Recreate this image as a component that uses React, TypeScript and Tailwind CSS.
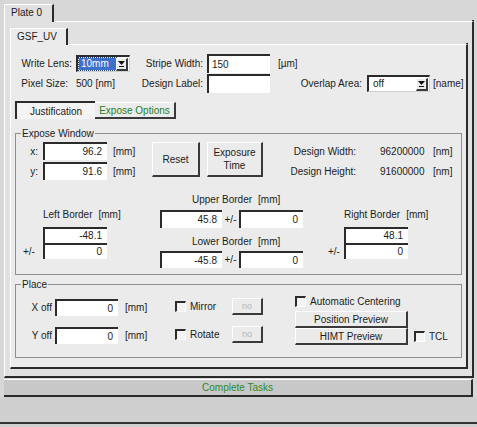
import type { ReactNode } from 'react';

function Field({ value = '', className = '' }: { value?: string; className?: string }) {
  return (
    <div
      className={`bg-white border-t-2 border-l-2 border-t-[#2b2b2b] border-l-[#2b2b2b] flex items-center justify-end pr-[5px] leading-none ${className}`}
    >
      {value}
    </div>
  );
}

function Btn({ children, className = '', disabled = false }: { children: ReactNode; className?: string; disabled?: boolean }) {
  return (
    <div
      className={`bg-[#ebebeb] border-t border-l border-r-2 border-b-2 border-t-white border-l-white border-r-[#3a3a3a] border-b-[#3a3a3a] flex items-center justify-center text-center leading-[13px] ${
        disabled ? 'text-[#b4b4b4] text-[9px]' : ''
      } ${className}`}
    >
      {children}
    </div>
  );
}

function Check() {
  return (
    <div className="w-[11px] h-[11px] shrink-0 bg-[#f3f3f3] border-t-2 border-l-2 border-r border-b border-t-[#2b2b2b] border-l-[#2b2b2b] border-r-white border-b-white" />
  );
}

function Combo({ value, selected = false, className = '' }: { value: string; selected?: boolean; className?: string }) {
  return (
    <div
      className={`bg-white border-t-2 border-l-2 border-r border-b border-t-[#2b2b2b] border-l-[#2b2b2b] border-r-[#d0d0d0] border-b-[#d0d0d0] flex items-center pl-[1px] pr-[1px] ${className}`}
    >
      <div className="flex-1 h-[12px] flex items-center">
        {selected ? (
          <span className="h-[12px] w-[37px] bg-[#3d70c9] text-white leading-[12px] pl-[2px] outline-1 outline-dotted outline-[#1a3c7a]">
            {value}
          </span>
        ) : (
          <span className="pl-[3px] leading-[12px]">{value}</span>
        )}
      </div>
      <div className="w-[12px] h-[13px] bg-[#ebebeb] border-t border-l border-r-2 border-b-2 border-t-white border-l-white border-r-[#3a3a3a] border-b-[#3a3a3a] flex flex-col items-center justify-center">
        <svg width="7" height="6" viewBox="0 0 7 6">
          <path d="M0 0 L7 0 L3.5 4 Z" fill="#111" />
          <rect x="1" y="5" width="5" height="1" fill="#111" />
        </svg>
      </div>
    </div>
  );
}

function BorderCol({ label, top, bottom, pad, pm }: { label: string; top: string; bottom: string; pad: string; pm: string }) {
  return (
    <div className="flex flex-col pt-[15px]">
      <div className={`h-[13px] leading-[13px] flex ${pad}`}>
        <span>{label}</span>
        <span className="ml-[6px]">[mm]</span>
      </div>
      <div className={`mt-[6px] ${pad}`}>
        <Field value={top} className="w-[64px] h-[16px]" />
      </div>
      <div className="flex items-center">
        <span className={`${pm}`}>+/-</span>
        <Field value={bottom} className="w-[64px] h-[16px]" />
      </div>
    </div>
  );
}

export default function App() {
  return (
    <div className="w-[477px] h-[427px] bg-[#d7d7d7] flex flex-col font-['Liberation_Sans',Arial,sans-serif] text-[10px] text-[#1c1c1c] overflow-hidden">
      <div className="pt-[4px] pl-[4px] pr-[3px] flex flex-col">
        {/* outer tab */}
        <div className="flex items-end">
          <div className="h-[18px] w-[50px] bg-[#e1e1e1] border-t border-l border-r-2 border-t-white border-l-white border-r-[#2a2a2a] pl-[6px] leading-[16px]">
            Plate 0
          </div>
          <div className="flex-1 h-[2px] border-b border-b-white border-r-2 border-r-[#2a2a2a]" />
        </div>

        <div className="h-[356px] bg-[#e1e1e1] border-l border-r-2 border-b-2 border-l-white border-r-[#2a2a2a] border-b-[#2a2a2a] pl-[5px] pt-[6px]">
          {/* inner tab */}
          <div className="flex items-end w-[458px]">
            <div className="h-[17px] w-[58px] bg-[#ebebeb] border-t border-l border-r-2 border-t-white border-l-white border-r-[#2a2a2a] pl-[6px] leading-[15px]">
              GSF_UV
            </div>
            <div className="flex-1 h-[2px] border-b border-b-white border-r-2 border-r-[#2a2a2a]" />
          </div>

          <div className="w-[458px] h-[324px] bg-[#ebebeb] border-l border-r-2 border-b-2 border-l-white border-r-[#2a2a2a] border-b-[#2a2a2a] pt-[9px] pl-[4px] flex flex-col">
            {/* row 1 */}
            <div className="flex items-center h-[19px] -ml-[4px]">
              <span className="w-[61px] text-right">Write Lens:</span>
              <Combo value="10mm" selected className="ml-[4px] w-[54px] h-[17px]" />
              <span className="w-[73px] text-right">Stripe Width:</span>
              <div className="ml-[4px] w-[63px] h-[19px] bg-white border-t-2 border-l-2 border-t-[#2b2b2b] border-l-[#2b2b2b] pl-[3px] flex items-center">150</div>
              <span className="ml-[8px]">[µm]</span>
            </div>
            {/* row 2 */}
            <div className="flex items-center h-[19px] mt-[1px] -ml-[4px]">
              <span className="w-[61px] text-right pr-[4px]">Pixel Size:</span>
              <span className="ml-[4px] w-[54px]">500 [nm]</span>
              <span className="w-[73px] text-right">Design Label:</span>
              <div className="ml-[4px] w-[63px] h-[19px] bg-white border-t-2 border-l-2 border-t-[#2b2b2b] border-l-[#2b2b2b]" />
              <span className="w-[92px] text-right">Overlap Area:</span>
              <Combo value="off" className="ml-[5px] w-[63px] h-[17px]" />
              <span className="ml-[3px]">[name]</span>
            </div>

            {/* sub tabs */}
            <div className="flex items-end mt-[8px]">
              <div className="w-[80px] h-[18px] bg-[#f4f4f4] border-t-2 border-l-2 border-t-[#2b2b2b] border-l-[#2b2b2b] flex items-center justify-center">
                Justification
              </div>
              <div className="w-[81px] h-[17px] bg-[#ececec] border-t border-r-2 border-b-2 border-t-white border-r-[#3a3a3a] border-b-[#3a3a3a] flex items-center justify-center text-[#1f7d25]">
                Expose Options
              </div>
            </div>

            {/* Expose Window */}
            <fieldset className="mt-[8px] w-[447px] h-[148px] border border-[#8e8e8e]">
              <legend className="ml-[5px] px-[1px] leading-[13px]">Expose Window</legend>
              <div className="flex items-start mt-[2px]">
                <div className="w-[136px] flex flex-col gap-[2px]">
                  <div className="flex items-center h-[18px]">
                    <span className="w-[22px] text-right">x:</span>
                    <Field value="96.2" className="ml-[5px] w-[64px] h-[18px]" />
                    <span className="ml-[6px]">[mm]</span>
                  </div>
                  <div className="flex items-center h-[18px]">
                    <span className="w-[22px] text-right">y:</span>
                    <Field value="91.6" className="ml-[5px] w-[64px] h-[18px]" />
                    <span className="ml-[6px]">[mm]</span>
                  </div>
                </div>
                <Btn className="w-[48px] h-[35px]">Reset</Btn>
                <Btn className="ml-[7px] w-[56px] h-[35px]">
                  Exposure
                  <br />
                  Time
                </Btn>
                <div className="flex flex-col gap-[2px]">
                  <div className="flex items-center h-[18px]">
                    <span className="w-[93px] text-right">Design Width:</span>
                    <span className="ml-[24px] w-[53px]">96200000</span>
                    <span>[nm]</span>
                  </div>
                  <div className="flex items-center h-[18px]">
                    <span className="w-[93px] text-right">Design Height:</span>
                    <span className="ml-[24px] w-[53px]">91600000</span>
                    <span>[nm]</span>
                  </div>
                </div>
              </div>

              <div className="flex items-start mt-[13px]">
                <div className="w-[144px]">
                  <BorderCol label="Left Border" top="-48.1" bottom="0" pad="pl-[27px]" pm="w-[27px] pl-[7px]" />
                </div>
                <div className="w-[143px] flex flex-col">
                  <div className="h-[13px] leading-[13px] pl-[32px] flex">
                    <span>Upper Border</span>
                    <span className="ml-[6px]">[mm]</span>
                  </div>
                  <div className="flex items-center mt-[4px]">
                    <Field value="45.8" className="w-[62px] h-[18px]" />
                    <span className="w-[17px] text-center">+/-</span>
                    <Field value="0" className="w-[64px] h-[18px]" />
                  </div>
                  <div className="h-[13px] leading-[13px] pl-[32px] flex mt-[7px]">
                    <span>Lower Border</span>
                    <span className="ml-[6px]">[mm]</span>
                  </div>
                  <div className="flex items-center mt-[3px]">
                    <Field value="-45.8" className="w-[62px] h-[17px]" />
                    <span className="w-[17px] text-center">+/-</span>
                    <Field value="0" className="w-[64px] h-[17px]" />
                  </div>
                </div>
                <div className="ml-[25px]">
                  <BorderCol label="Right Border" top="48.1" bottom="0" pad="pl-[16px]" pm="w-[16px]" />
                </div>
              </div>
            </fieldset>

            {/* Place */}
            <fieldset className="mt-[3px] w-[447px] h-[80px] border border-[#8e8e8e]">
              <legend className="ml-[5px] px-[1px] leading-[13px]">Place</legend>
              <div className="flex items-start">
                <div className="w-[159px] flex flex-col">
                  <div className="flex items-center h-[17px] mt-[8px]">
                    <span className="w-[36px] text-right">X off</span>
                    <Field value="0" className="ml-[3px] w-[63px] h-[17px]" />
                    <span className="ml-[7px]">[mm]</span>
                  </div>
                  <div className="flex items-center h-[17px] mt-[11px]">
                    <span className="w-[36px] text-right">Y off</span>
                    <Field value="0" className="ml-[3px] w-[63px] h-[17px]" />
                    <span className="ml-[7px]">[mm]</span>
                  </div>
                </div>
                <div className="w-[88px] flex flex-col">
                  <div className="flex items-center h-[17px] mt-[7px]">
                    <Check />
                    <span className="ml-[4px]">Mirror</span>
                    <Btn disabled className="ml-auto w-[31px] h-[17px]">no</Btn>
                  </div>
                  <div className="flex items-center h-[17px] mt-[11px]">
                    <Check />
                    <span className="ml-[4px]">Rotate</span>
                    <Btn disabled className="ml-auto w-[31px] h-[17px]">no</Btn>
                  </div>
                </div>
                <div className="ml-[32px] flex flex-col">
                  <div className="flex items-center h-[11px] mt-[5px]">
                    <Check />
                    <span className="ml-[4px]">Automatic Centering</span>
                  </div>
                  <Btn className="mt-[4px] w-[113px] h-[17px]">Position Preview</Btn>
                  <div className="flex items-center">
                    <Btn className="w-[113px] h-[17px]">HIMT Preview</Btn>
                    <div className="ml-[6px]">
                      <Check />
                    </div>
                    <span className="ml-[4px]">TCL</span>
                  </div>
                </div>
              </div>
            </fieldset>
          </div>
        </div>

        {/* Complete Tasks bar */}
        <div className="mt-[1px] w-[469px] h-[18px] bg-[#c8c8c8] border-t border-r-2 border-b-2 border-t-white border-r-[#2a2a2a] border-b-[#2a2a2a] flex items-center justify-center text-[#2d8a2d]">
          Complete Tasks
        </div>
      </div>
      <div className="h-[25px] bg-[#cfcfcf]" />
      <div className="h-[2px] bg-[#333]" />
      <div className="flex-1 bg-[#d0d0d0]" />
    </div>
  );
}
